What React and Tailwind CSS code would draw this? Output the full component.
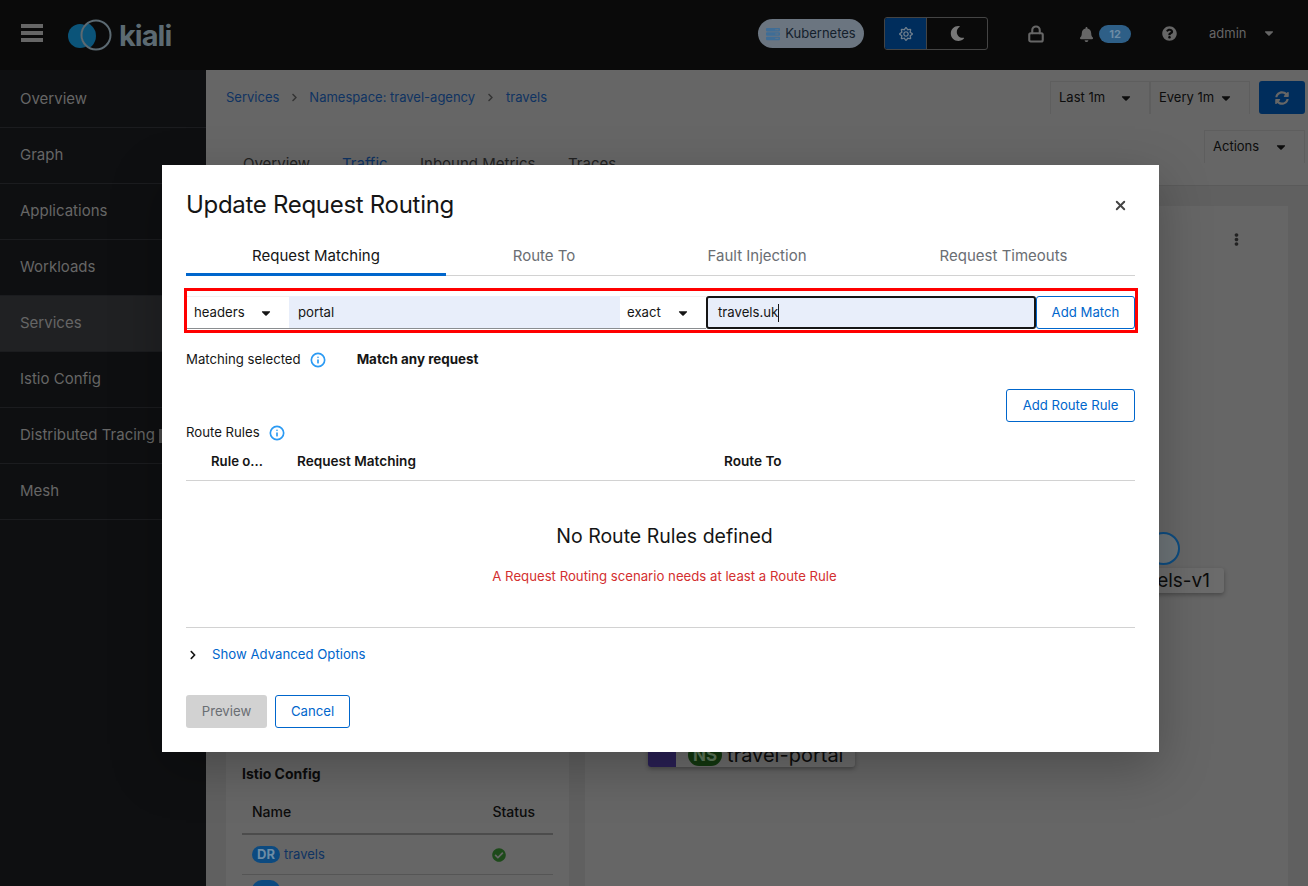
import { Lock, Info, X } from 'lucide-react'
import { FaServer, FaRegSun, FaMoon, FaBell, FaQuestionCircle, FaSyncAlt, FaEllipsisV, FaCheckCircle, FaCaretDown, FaChevronRight } from 'react-icons/fa'

const navItems = ['Overview', 'Graph', 'Applications', 'Workloads', 'Services', 'Istio Config', 'Distributed Tracing', 'Mesh']

function Logo() {
  return (
    <div className="flex w-[104px] items-center">
      <svg width="44" height="32" viewBox="0 0 44 32" className="shrink-0">
        <defs>
          <clipPath id="ring-inner">
            <circle cx="28" cy="16" r="14" />
          </clipPath>
        </defs>
        <circle cx="12" cy="17" r="12" fill="#0b5479" />
        <circle cx="28" cy="16" r="15" fill="#0a0a0a" />
        <circle cx="14" cy="17" r="14" fill="#0b5479" clipPath="url(#ring-inner)" />
        <circle cx="28" cy="16" r="14.5" fill="none" stroke="#5c6a72" strokeWidth="2" />
      </svg>
      <span className="ml-[7px] text-[29px] font-bold tracking-[-1px] leading-none text-[#5c6a72]">kiali</span>
    </div>
  )
}

function Header() {
  return (
    <header className="flex h-[70px] shrink-0 items-center bg-[#0a0a0a] pb-[3px] pl-[21px] text-[#666]">
      <svg width="22" height="18" viewBox="0 0 22 18" className="-mt-[1px] mr-[3px] shrink-0 fill-[#666]">
        <rect width="22" height="4" />
        <rect y="7" width="22" height="4" />
        <rect y="14" width="22" height="4" />
      </svg>
      <div className="ml-[22px] mt-[3px]">
        <Logo />
      </div>
      <div className="ml-[586px] flex h-[29px] w-[106px] items-center justify-center gap-[5px] rounded-full bg-[#6b7580] text-[13px] text-[#14202c]">
        <FaServer size={14} className="text-[#3f6d96]" />
        Kubernetes
      </div>
      <div className="ml-[20px] flex h-[33px] w-[104px] overflow-hidden rounded-[3px] border border-[#444]">
        <div className="flex w-[41px] items-center justify-center bg-[#002d5c]">
          <FaRegSun size={14} className="text-[#6d7d8c]" />
        </div>
        <div className="flex flex-1 items-center justify-center border-l border-[#444]">
          <FaMoon size={15} className="text-[#777]" />
        </div>
      </div>
      <Lock size={18} strokeWidth={2.8} className="ml-[39px] mt-[1px] text-[#666]" />
      <FaBell size={15} className="ml-[34px] mt-[1px] text-[#666]" />
      <span className="ml-[5px] mt-[1px] flex h-[18px] w-[32px] items-center justify-center rounded-full bg-[#2e5f87] text-[11px] font-bold text-[#6d8ca5]">12</span>
      <FaQuestionCircle size={15} className="ml-[31px] text-[#666]" />
      <span className="ml-[32px] text-[13px] text-[#666]">admin</span>
      <FaCaretDown size={14} className="ml-[16px] -mt-[1px] text-[#666]" />
    </header>
  )
}

function Sidebar() {
  return (
    <nav className="w-[206px] shrink-0 bg-[#0e0f11] pt-[2px]">
      {navItems.map((item) => (
        <div
          key={item}
          className={`flex h-[56px] items-center whitespace-nowrap border-b border-[#1b1c1f] pl-[20px] text-[15px] text-[#666] ${item === 'Services' ? 'bg-[#202123]' : ''}`}
        >
          {item}
          {item === 'Distributed Tracing' && <span className="ml-[4px] h-[14px] w-[3px] bg-[#4a4a4a]" />}
        </div>
      ))}
    </nav>
  )
}

function Select({ label, width }) {
  return (
    <div className={`flex h-[33px] items-center justify-between border-x border-t border-[#5e5e5e] border-b-[#444] pl-2 pr-4 text-[13px] text-[#0c0c0c] ${width}`}>
      {label}
      <FaCaretDown size={14} className="text-[#0c0c0c]" />
    </div>
  )
}

function Background() {
  return (
    <main className="flex min-w-0 flex-1 flex-col bg-[#606060]">
      <div className="h-[115px] shrink-0 bg-[#666]">
        <div className="flex items-center pl-[20px] pr-[3px] pt-[11px] text-[13px]">
          <span className="text-[#0f3362]">Services</span>
          <FaChevronRight size={9} className="ml-[11px] mr-[10px] text-[#333]" />
          <span className="text-[#0f3362]">Namespace: travel-agency</span>
          <FaChevronRight size={9} className="mx-[11px] text-[#333]" />
          <span className="text-[#0f3362]">travels</span>
          <div className="ml-auto flex items-center">
            <Select label="Last 1m" width="w-[100px]" />
            <Select label="Every 1m" width="w-[100px]" />
            <div className="ml-[9px] flex h-[33px] w-[46px] items-center justify-center rounded-[3px] bg-[#002d5c]">
              <FaSyncAlt size={14} className="text-[#666]" />
            </div>
          </div>
        </div>
        <div className="mt-[16px] flex justify-end pr-[3px]">
          <Select label="Actions" width="w-[101px]" />
        </div>
        <div className="-mt-[9px] flex h-[32px] border-b border-[#5a5a5a] pl-[37px] text-[15px] leading-[20px] text-[#222]">
          <span className="w-[99px]">Overview</span>
          <span className="w-[78px] text-[#0f3362]">Traffic</span>
          <span className="w-[148px]">Inbound Metrics</span>
          <span>Traces</span>
        </div>
      </div>
      <div className="flex min-h-0 flex-1 gap-[16px] px-[20px] pt-[21px]">
        <section className="relative w-[343px] shrink-0 bg-[#666]">
          <div className="absolute inset-x-[16px] top-[557px]">
            <h3 className="text-[14px] font-bold text-[#0c0c0c]">Istio Config</h3>
            <div className="mt-[18px] flex justify-between border-b-2 border-[#4c4c4c] pb-[12px] pl-[10px] pr-[18px] text-[14px] font-medium leading-[19px] text-[#0c0c0c]">
              <span>Name</span>
              <span>Status</span>
            </div>
            <div className="flex h-[40px] items-center justify-between border-b border-[#555] pl-[10px] pr-[47px] text-[13px]">
              <span className="flex items-center gap-[4px] text-[#0f3362]">
                <span className="rounded-full bg-[#0c4a80] px-[5px] py-[1px] text-[13px] font-bold leading-[15px] text-[#6d8ca5]">DR</span>
                travels
              </span>
              <FaCheckCircle size={14} className="text-[#1d4a1a]" />
            </div>
            <div className="mt-[5px] ml-[10px] h-[10px] w-[28px] rounded-t-full bg-[#0c4a80]" />
          </div>
        </section>
        <section className="relative flex-1 bg-[#666]">
          <FaEllipsisV size={13} className="absolute left-[645px] top-[27px] text-[#222]" />
          <div className="absolute left-[562px] top-[326px] h-[33px] w-[33px] rounded-full border-2 border-[#0d4c80] bg-[#6d7478]" />
          <div className="absolute left-[500px] top-[362px] flex h-[25px] w-[139px] items-center justify-end rounded-[3px] bg-[#6b6b6b] pr-[14px] pt-[2px] text-[19px] text-[#0c0c0c] shadow-[0_2px_4px_rgba(0,0,0,0.3)]">
            travels-v1
          </div>
          <div className="absolute left-[63px] top-[530px] flex h-[31px] w-[207px] items-center overflow-hidden rounded-[3px] bg-[#6b6b6b] pt-[6px] text-[20px] text-[#0c0c0c] shadow-[0_2px_4px_rgba(0,0,0,0.3)]">
            <span className="-mt-[6px] h-[31px] w-[28px] bg-[#2a2056]" />
            <span className="ml-[12px] mr-[5px] rounded-full bg-[#12380f] px-[5px] text-[17px] font-bold leading-[22px] text-[#5f7a5c]">NS</span>
            travel-portal
          </div>
        </section>
      </div>
    </main>
  )
}

function InfoIcon() {
  return <Info size={16} strokeWidth={2.5} className="text-[#2b9af3]" />
}

const tabs = [
  { label: 'Request Matching', width: 'w-[260px]', active: true },
  { label: 'Route To', width: 'w-[196px]' },
  { label: 'Fault Injection', width: 'w-[230px]' },
  { label: 'Request Timeouts', width: 'w-[263px]' },
]

function MatchSelect({ label, width }) {
  return (
    <div className={`flex h-[33px] shrink-0 items-center justify-between border-t border-t-[#f0f0f0] border-b border-b-[#8a8d90] pl-[7px] pr-[16px] text-[#151515] ${width}`}>
      {label}
      <FaCaretDown size={14} className="text-[#151515]" />
    </div>
  )
}

function Modal() {
  return (
    <div className="absolute inset-0 pl-[162px] pt-[165px]">
      <div className="flex h-[587px] w-[997px] flex-col bg-white px-[24px] pt-[24px] text-[13.2px] text-[#151515] shadow-[0_16px_48px_rgba(3,3,3,0.25)]">
        <div className="flex h-[30px] items-center justify-between pt-[2px]">
          <h1 className="text-[24px] font-normal tracking-[-0.3px] text-[#151515]">Update Request Routing</h1>
          <X size={15} strokeWidth={3} className="mr-[7px] text-[#444]" />
        </div>
        <div className="mt-[19px] flex h-[38px] border-b border-[#d2d2d2] text-[15px]">
          {tabs.map((t) => (
            <div
              key={t.label}
              className={`flex h-[38px] items-center justify-center ${t.width} ${t.active ? 'border-b-[3px] border-[#06c] pt-[1px] text-[#151515]' : 'pb-[2px] text-[#6a6e73]'}`}
            >
              {t.label}
            </div>
          ))}
        </div>
        <div className="-ml-[2px] -mr-[3px] mt-[12px] border-[3px] border-[#f00] pb-[1px] pt-[5px]">
          <div className="flex h-[33px] items-stretch">
            <MatchSelect label="headers" width="w-[102px]" />
            <div className="flex w-[331px] shrink-0 items-center border-b border-[#8a8d90] bg-[#e8eefa] pl-[9px] pt-[2px]">portal</div>
            <MatchSelect label="exact" width="w-[86px]" />
            <div className="flex w-[330px] shrink-0 items-center rounded-[3px] border-2 border-[#151515] bg-[#e8eefa] pl-[10px] pt-[1px]">
              travels.uk
              <span className="h-[18px] w-px bg-[#151515]" />
            </div>
            <button className="w-[99px] shrink-0 rounded-[3px] border border-[#06c] text-[#06c]">Add Match</button>
          </div>
        </div>
        <div className="mt-[18px] flex h-[18px] items-center">
          <span>Matching selected</span>
          <span className="ml-[9px]"><InfoIcon /></span>
          <span className="ml-[31px] -mt-px text-[13.4px] font-bold">Match any request</span>
        </div>
        <div className="mt-[20px] flex justify-end">
          <button className="h-[33px] w-[129px] rounded-[3px] border border-[#06c] text-[#06c]">Add Route Rule</button>
        </div>
        <div className="mt-[2px] flex h-[18px] items-center">
          <span>Route Rules</span>
          <span className="ml-[9px]"><InfoIcon /></span>
        </div>
        <div className="mt-[11px] flex h-[28px] items-center border-b border-[#d2d2d2] pb-[10px] text-[13.6px] font-semibold">
          <span className="ml-[25px] w-[86px] text-[13.2px]">Rule o...</span>
          <span className="w-[427px]">Request Matching</span>
          <span>Route To</span>
        </div>
        <div className="mt-[42px] pl-[8px] text-center text-[19.5px] leading-[26px]">No Route Rules defined</div>
        <div className="mt-[18px] pl-[8px] text-center leading-[18px] text-[#d32f2f]">A Request Routing scenario needs at least a Route Rule</div>
        <div className="mt-[42px] border-t border-[#d2d2d2]" />
        <div className="mt-[18px] flex h-[18px] items-center">
          <FaChevronRight size={10} className="ml-[2px] text-[#151515]" />
          <span className="ml-[14px] text-[#06c]">Show Advanced Options</span>
        </div>
        <div className="mt-[31px] flex gap-[8px]">
          <button className="h-[33px] w-[81px] rounded-[3px] bg-[#d2d2d2] text-[#6a6e73]">Preview</button>
          <button className="h-[33px] w-[75px] rounded-[3px] border border-[#06c] text-[#06c]">Cancel</button>
        </div>
      </div>
    </div>
  )
}

export default function App() {
  return (
    <div className="relative flex h-[886px] flex-col overflow-hidden font-['Inter',sans-serif]">
      <Header />
      <div className="flex min-h-0 flex-1">
        <Sidebar />
        <Background />
      </div>
      <Modal />
    </div>
  )
}
